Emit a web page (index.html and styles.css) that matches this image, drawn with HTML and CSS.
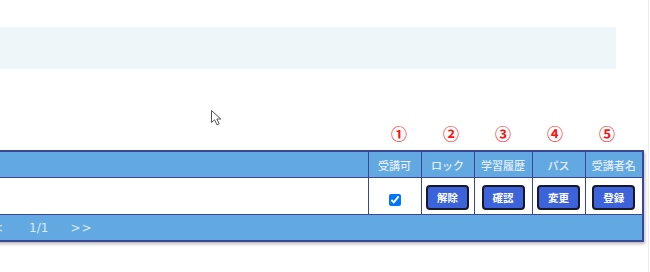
FILE: index.html
```html
<!DOCTYPE html>
<html lang="ja">
<head>
<meta charset="utf-8">
<link rel="stylesheet" href="styles.css">
</head>
<body>
<div class="page">
  <div class="band"></div>
  <div class="marks">
    <span>①</span><span>②</span><span>③</span><span>④</span><span>⑤</span>
  </div>
  <table class="grid">
    <colgroup>
      <col class="c-main"><col class="c53"><col class="c53"><col class="c58"><col class="c53"><col class="c58">
    </colgroup>
    <thead>
      <tr><th></th><th>受講可</th><th>ロック</th><th>学習履歴</th><th>パス</th><th>受講者名</th></tr>
    </thead>
    <tbody>
      <tr>
        <td></td>
        <td><input class="chk" type="checkbox" checked></td>
        <td><button class="btn">解除</button></td>
        <td><button class="btn">確認</button></td>
        <td><button class="btn">変更</button></td>
        <td><button class="btn">登録</button></td>
      </tr>
    </tbody>
    <tfoot>
      <tr><td colspan="6"><div class="pager"><span>&lt;&lt;</span><span class="num">1/1</span><span class="next">&gt;&gt;</span></div></td></tr>
    </tfoot>
  </table>
  <svg class="cursor" width="14" height="17" viewBox="0 0 14 17"><path d="M1.5 1.5 L1.5 13.5 L4.5 10.8 L7 15.8 L9.2 14.8 L6.8 10 L10.8 10 Z" fill="#fff" stroke="#555" stroke-width="1" stroke-linejoin="round"/></svg>
</div>
</body>
</html>
```
FILE: styles.css
```css
html, body {
  margin: 0;
  padding: 0;
  background: #fff;
  overflow: hidden;
}
.page {
  position: relative;
  box-sizing: border-box;
  width: 649px;
  height: 272px;
  padding-top: 27px;
  border-right: 1px solid #ececec;
  font-family: "Noto Sans CJK JP", "Noto Sans", sans-serif;
}
.band {
  width: 616px;
  height: 42px;
  background: #edf6f9;
}
.marks {
  display: flex;
  gap: 36px;
  padding-left: 391px;
  margin-top: 56px;
  height: 25px;
  line-height: 17px;
}
.marks span {
  width: 16px;
  text-align: center;
  color: #ff1010;
  font-size: 16px;
  font-weight: bold;
}
.grid {
  margin-left: -20px;
  width: 663px;
  table-layout: fixed;
  border-collapse: collapse;
  border: 2px solid #3c4697;
  box-shadow: 1px 2px 3px rgba(0, 0, 0, 0.28);
}
.c-main { width: 387px; }
.c53 { width: 53px; }
.c58 { width: 58px; }
.grid th {
  height: 25px;
  padding: 0;
  background: #62a9e1;
  color: #e4edf7;
  font-size: 11px;
  font-weight: 500;
  border: 1px solid #3c4697;
  text-align: center;
}
.grid tbody td {
  height: 36px;
  padding: 0;
  background: #fff;
  border-left: 1px solid #3c4697;
  text-align: center;
  vertical-align: middle;
}
.chk {
  width: 12px;
  height: 12px;
  margin: 2px 0 0;
  vertical-align: middle;
}
.btn {
  width: 43px;
  height: 25px;
  padding: 0;
  background: #3c63d9;
  border: 2px solid #17192b;
  border-radius: 4px;
  color: #fff;
  font-family: "Noto Sans CJK JP", sans-serif;
  font-size: 10.5px;
  font-weight: bold;
  vertical-align: middle;
}
.grid tfoot td {
  height: 25px;
  padding: 0;
  background: #62a9e1;
  border-top: 1px solid #3c4697;
}
.pager {
  display: flex;
  align-items: center;
  padding-left: 1px;
  color: #dfe9f5;
  font-family: "DejaVu Sans", sans-serif;
  font-size: 12px;
}
.pager .num {
  margin-left: 26px;
}
.pager .next {
  margin-left: 22px;
  letter-spacing: 1px;
}
.cursor {
  position: absolute;
  left: 210px;
  top: 109px;
}
```
